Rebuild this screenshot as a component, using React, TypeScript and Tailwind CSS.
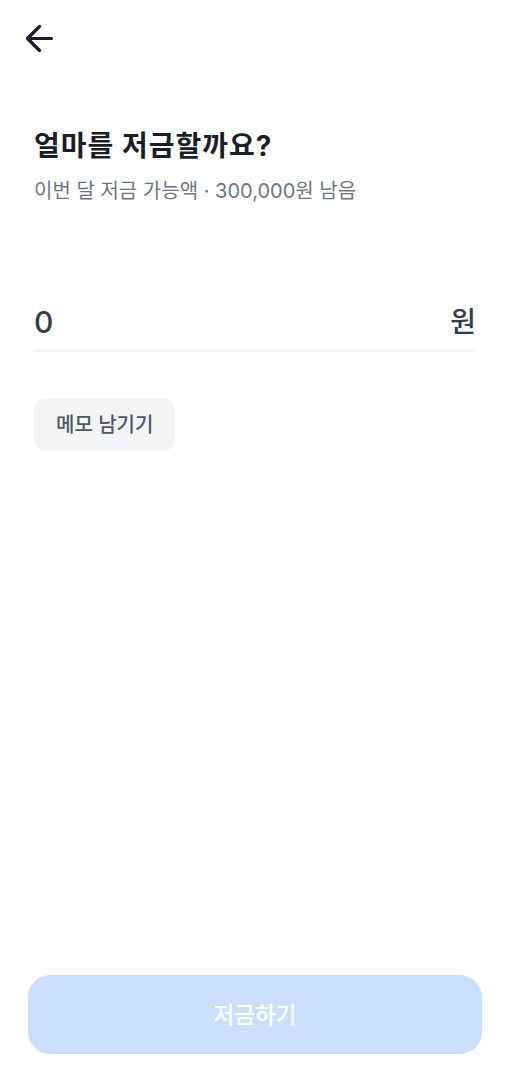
import React from "react";

export default function App() {
  return (
    <div
      className="relative w-[529px] h-[1080px] bg-white overflow-hidden"
      style={{ fontFamily: 'Inter, "Noto Sans CJK KR", sans-serif' }}
    >
      <div className="flex flex-col">
        <div className="h-[78px] pl-[24px] pt-[24px]">
          <svg width="30" height="28" viewBox="0 0 30 28" fill="none">
            <path
              d="M27.5 14.5H3.5M15.5 2.5L3.5 14.5L15.5 26.5"
              stroke="#191f28"
              strokeWidth="3.2"
              strokeLinecap="round"
              strokeLinejoin="round"
            />
          </svg>
        </div>
        <div className="pl-[34px] pt-[50px]">
          <h1 className="text-[28px] leading-[36px] font-bold text-[#191f28] tracking-[1px]">
            얼마를 저금할까요?
          </h1>
          <p className="mt-[13px] text-[20px] leading-[28px] text-[#6b7684]">
            이번 달 저금 가능액 · 300,000원 남음
          </p>
        </div>
        <div className="ml-[34px] w-[442px] mt-[95px]">
          <div className="flex items-center justify-between h-[44px]">
            <span className="text-[30px] text-[#333d4b] font-medium">0</span>
            <span className="text-[28px] text-[#333d4b] font-medium">원</span>
          </div>
          <div className="mt-[5px] h-[3px] bg-[#f2f4f6]" />
        </div>
        <div className="ml-[34px] mt-[46px]">
          <button className="h-[53px] px-[22px] rounded-[12px] bg-[#f2f4f6] text-[20px] font-medium text-[#4e5968]">
            메모 남기기
          </button>
        </div>
      </div>
      <div className="absolute left-[28px] top-[975px] w-[454px] h-[79px] rounded-[22px] bg-[#cbdffd] flex items-center justify-center">
        <span className="text-[22.5px] font-medium text-white">저금하기</span>
      </div>
    </div>
  );
}
